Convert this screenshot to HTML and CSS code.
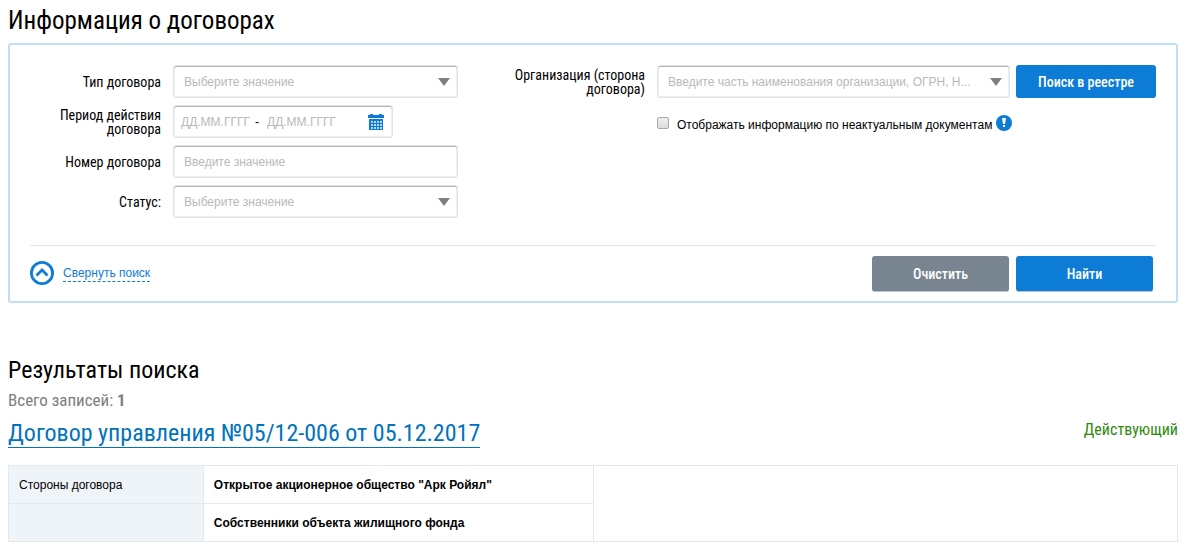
FILE: index.html
```html
<!DOCTYPE html>
<html lang="ru">
<head>
  <meta charset="utf-8">
  <title>Информация о договорах</title>
  <meta name="viewport" content="width=device-width,initial-scale=1">
  <link rel="stylesheet" href="styles.css">
</head>
<body>
<h1 class="page-title">Информация о договорах</h1>

<form class="search">
  <div class="search-fields">
    <div class="col">
      <div class="row">
        <label class="label" for="type">Тип договора</label>
        <div class="select-wrap">
          <select class="control" id="type"><option>Выберите значение</option></select>
        </div>
      </div>
      <div class="row">
        <label class="label" for="date-from">Период действия договора</label>
        <div class="control period">
          <input class="date" id="date-from" type="text" placeholder="ДД.ММ.ГГГГ">
          <span class="dash">-</span>
          <input class="date" id="date-to" type="text" placeholder="ДД.ММ.ГГГГ" aria-label="Период действия по">
          <button class="calendar" type="button" aria-label="Календарь">
            <svg width="16" height="16" viewBox="0 0 16 16" shape-rendering="crispEdges">
              <path fill="#0d7cd6" d="M0 1h2V0h3v1h6V0h3v1h2v3H0zM1 5h14v11H1z"/>
              <path stroke="#b5d7f3" stroke-width="2" stroke-dasharray="2 1" d="M3 8h11M3 11h11M3 14h11"/>
            </svg>
          </button>
        </div>
      </div>
      <div class="row">
        <label class="label" for="number">Номер договора</label>
        <input class="control" id="number" type="text" placeholder="Введите значение">
      </div>
      <div class="row">
        <label class="label" for="status">Статус:</label>
        <div class="select-wrap">
          <select class="control" id="status"><option>Выберите значение</option></select>
        </div>
      </div>
    </div>

    <div class="col">
      <div class="row">
        <label class="label" for="org">Организация (сторона договора)</label>
        <div class="org-field">
          <div class="select-wrap">
            <select class="control" id="org"><option>Введите часть наименования организации, ОГРН, Н...</option></select>
          </div>
          <button class="btn btn-registry" type="button">Поиск в реестре</button>
        </div>
      </div>
      <div class="check-row">
        <input class="check" id="inactive" type="checkbox">
        <label class="check-label" for="inactive">Отображать информацию по неактуальным документам</label>
        <svg class="hint" width="16" height="16" viewBox="0 0 16 16">
          <circle cx="8" cy="8" r="8" fill="#0d7cd6"/>
          <path fill="#fff" d="M6 3h4l-1 6H7zM7 10h2v2H7z"/>
        </svg>
      </div>
    </div>
  </div>

  <div class="search-footer">
    <a class="collapse" href="#">
      <svg width="24" height="24" viewBox="0 0 24 24" fill="none" stroke="#0d7cd6">
        <circle cx="12" cy="12" r="10.6" stroke-width="2.8"/>
        <path stroke-width="2.8" d="M6.500 14.500L12 9l5.500 5.500"/>
      </svg>
      <span class="collapse-text">Свернуть поиск</span>
    </a>
    <div class="actions">
      <button class="btn btn-clear" type="reset">Очистить</button>
      <button class="btn" type="submit">Найти</button>
    </div>
  </div>
</form>

<h2 class="results-title">Результаты поиска</h2>
<p class="total">Всего записей: <b>1</b></p>

<div class="contract-head">
  <a class="contract-link" href="#">Договор управления №05/12-006 от 05.12.2017</a>
  <span class="contract-status">Действующий</span>
</div>

<table class="contract">
  <tr>
    <th class="name" scope="row">Стороны договора</th>
    <td class="value">Открытое акционерное общество "Арк Ройял"</td>
    <td rowspan="2"></td>
  </tr>
  <tr>
    <th class="name"></th>
    <td class="value">Собственники объекта жилищного фонда</td>
  </tr>
</table>
</body>
</html>
```

FILE: styles.css
```css
* {
  box-sizing: border-box;
}

body {
  margin: 0;
  padding: 6px 9px 11px 8px;
  background: #fff;
  color: #000;
  font: 12px/16px "Liberation Sans", Arial, sans-serif;
}

h1, h2, p {
  margin: 0;
}

.page-title,
.results-title,
.total,
.label,
.btn,
.contract-head {
  font-family: "Roboto Condensed", "Liberation Sans Narrow", Roboto, sans-serif;
}

.page-title {
  font-size: 25px;
  font-weight: normal;
  line-height: 29px;
}

/* search form */
.search {
  margin-top: 8px;
  padding: 20px 20px 9px;
  border: 2px solid #c0def5;
  border-radius: 3px;
}

.search-fields {
  display: grid;
  grid-template-columns: 2fr 3fr;
  column-gap: 56px;
}

.col {
  display: flex;
  flex-direction: column;
  gap: 7px;
}

.row {
  display: grid;
  grid-template-columns: 131px 1fr;
  column-gap: 12px;
  align-items: center;
}

.org-field {
  display: grid;
  grid-template-columns: 1fr 140px;
  column-gap: 6px;
}

.label {
  font-size: 14px;
  line-height: 14px;
  text-align: right;
}

.control {
  display: block;
  width: 100%;
  height: 33px;
  padding: 0 10px;
  border: 1px solid #e0e3e6;
  border-radius: 3px;
  background: #fff;
  box-shadow: inset 0 1px #b4b4b4, inset 0 0 0 1px #eef1f3;
  color: #b9b9b9;
  font: 12px/16px "Liberation Sans", Arial, sans-serif;
  appearance: none;
}

::placeholder {
  color: #b9b9b9;
  opacity: 1;
}

.select-wrap {
  position: relative;
  min-width: 0;
}

.select-wrap::after {
  content: "";
  position: absolute;
  top: 13px;
  right: 8px;
  border: 6px solid transparent;
  border-top: 8px solid #808080;
  border-bottom: 0;
  pointer-events: none;
}

.period {
  display: flex;
  align-items: center;
  width: 220px;
  padding: 0 8px 0 7px;
}

.date {
  width: 74px;
  padding: 0;
  border: 0;
  font: inherit;
}

.dash {
  width: 12px;
  color: #000;
}

.calendar {
  height: 16px;
  margin-left: auto;
  padding: 0;
  border: 0;
  background: none;
}

.btn {
  height: 36px;
  padding: 0;
  border: 0;
  border-bottom: 1px solid #b7c4cf;
  border-radius: 3px;
  background: #0d7cd6;
  color: #fff;
  font-size: 14px;
  font-weight: 500;
}

.btn-registry {
  height: 33px;
  border-bottom: 0;
}

.btn-clear {
  background: #788590;
}

.check-row {
  display: flex;
  align-items: center;
  height: 36px;
  padding-left: 143px;
}

.check {
  width: 12px;
  height: 12px;
  margin: 0 8px 0 0;
  border: 1px solid #a9a9a9;
  border-radius: 2px;
  background: linear-gradient(#eee, #dcdcdc);
  appearance: none;
}

.check-label {
  padding-top: 3px;
}

.hint {
  margin-left: 4px;
}

.search-footer {
  display: flex;
  justify-content: space-between;
  margin-top: 27px;
  padding: 10px 3px 0 0;
  border-top: 1px solid #e3e5e6;
}

.collapse {
  display: flex;
  align-items: center;
  gap: 9px;
  height: 34px;
  color: #0d7cd6;
  text-decoration: none;
}

.collapse-text {
  border-bottom: 1px dashed #0d7cd6;
  line-height: 16px;
}

.actions {
  display: grid;
  grid-template-columns: 137px 137px;
  gap: 7px;
}

/* results */
.results-title {
  margin-top: 53px;
  font-size: 24px;
  font-weight: normal;
  line-height: 28px;
}

.total {
  margin-top: 5px;
  color: #808080;
  font-size: 17px;
  line-height: 22px;
}

.contract-head {
  display: flex;
  justify-content: space-between;
  margin-top: 8px;
}

.contract-link {
  border-bottom: 1px solid #0073bd;
  color: #0073bd;
  font-size: 24px;
  line-height: 28px;
  text-decoration: none;
}

.contract-status {
  color: #2e8b0e;
  font-size: 16px;
  line-height: 22px;
}

.contract {
  width: 100%;
  margin-top: 17px;
  border-collapse: collapse;
  table-layout: fixed;
}

.contract th,
.contract td {
  height: 38px;
  padding: 0 10px;
  border: 1px solid #e3e8ec;
  text-align: left;
}

.contract .name {
  width: 16.67%;
  background: #eff4f8;
  font-weight: normal;
}

.contract .value {
  width: 33.4%;
  font-weight: bold;
}
```
